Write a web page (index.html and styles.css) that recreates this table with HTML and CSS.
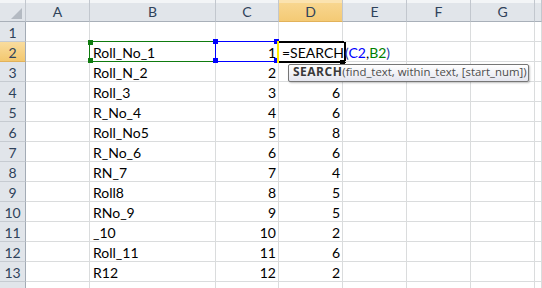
FILE: index.html
```html
<!DOCTYPE html>
<html lang="en">
<head>
    <meta charset="UTF-8">
    <meta name="viewport" content="width=device-width, initial-scale=1.0">
    <title>SEARCH formula</title>
    <link rel="stylesheet" href="styles.css">
</head>
<body>
    <div class="sheet">
        <div class="grid">
            <!-- cells are rendered by the script below -->
        </div>

        <!-- range finder boxes for the references in the formula -->
        <div class="range range-b"></div>
        <div class="knob knob-green" style="left: 88px; top: 40px;"></div>
        <div class="knob knob-green" style="left: 88px; top: 58px;"></div>
        <div class="range range-c"></div>
        <div class="knob knob-blue" style="left: 213px; top: 39px;"></div>
        <div class="knob knob-blue" style="left: 213px; top: 58px;"></div>
        <div class="knob knob-blue" style="left: 274px; top: 39px;"></div>
        <div class="knob knob-blue" style="left: 274px; top: 58px;"></div>

        <!-- cell being edited -->
        <div class="edit-box"></div>
        <div class="edit-mark"></div>
        <div class="fill-handle"></div>

        <div class="tip"><b>SEARCH</b>(find_text, within_text, [start_num])</div>
    </div>

    <script>
// Sheet data: column B text, column C number, column D result
// (D3 sits under the tooltip, so it is left blank)
const rows = [
    ['', '', ''],
    ['Roll_No_1', '1', 'formula'],
    ['Roll_N_2', '2', ''],
    ['Roll_3', '3', '6'],
    ['R_No_4', '4', '6'],
    ['Roll_No5', '5', '8'],
    ['R_No_6', '6', '6'],
    ['RN_7', '7', '4'],
    ['Roll8', '8', '5'],
    ['RNo_9', '9', '5'],
    ['_10', '10', '2'],
    ['Roll_11', '11', '6'],
    ['R12', '12', '2'],
    ['', '', '']
];

const columns = ['A', 'B', 'C', 'D', 'E', 'F', 'G', ''];
const activeCol = 'D';
const activeRow = 2;

// formula shown while typing in D2
const formulaHTML = '=SEARCH<span class="caret"></span><span class="paren">(</span>' +
    '<span class="ref-c">C2</span>,<span class="ref-b">B2</span><span class="paren">)</span>';

function renderSheet() {
    const grid = document.querySelector('.grid');
    let html = '<div class="cell head corner"></div>';

    columns.forEach(col => {
        const active = col === activeCol ? ' active' : '';
        html += `<div class="cell head${active}">${col}</div>`;
    });

    rows.forEach((row, i) => {
        const n = i + 1;
        const active = n === activeRow ? ' active' : '';
        // last row only peeks in at the bottom edge, its number is not visible
        const label = n < rows.length ? n : '';
        html += `<div class="cell rowhead${active}">${label}</div>`;
        html += '<div class="cell"></div>';
        html += `<div class="cell">${row[0]}</div>`;
        html += `<div class="cell num">${row[1]}</div>`;
        if (row[2] === 'formula') {
            html += `<div class="cell editing">${formulaHTML}</div>`;
        } else {
            html += `<div class="cell num">${row[2]}</div>`;
        }
        html += '<div class="cell"></div><div class="cell"></div><div class="cell"></div><div class="cell"></div>';
    });

    grid.innerHTML = html;
}

document.addEventListener('DOMContentLoaded', () => {
    renderSheet();
});
    </script>
</body>
</html>
```

FILE: styles.css
```css
* {
    margin: 0;
    padding: 0;
    box-sizing: border-box;
}

body {
    font-family: Lato, "Liberation Sans", sans-serif;
    font-size: 14px;
    background-color: #fff;
    overflow: hidden;
}

.sheet {
    position: relative;
    width: 542px;
    height: 288px;
    overflow: hidden;
}

.grid {
    display: grid;
    grid-template-columns: 26px 64px 126px 63px 64px 64px 64px 64px 1fr;
    grid-template-rows: 22px;
    grid-auto-rows: 20px;
}

.cell {
    border-right: 1px solid #dadcdd;
    border-bottom: 1px solid #dadcdd;
    line-height: 21px;
    padding: 0 3px;
    white-space: nowrap;
    color: #000;
}

.num {
    text-align: right;
    padding-right: 2px;
}

.head {
    background: linear-gradient(#f3f5f7 0, #f3f5f7 3px, #e1e5ea 3px);
    color: #2f425a;
    text-align: center;
    padding-top: 1px;
    border-right-color: #c2c7ce;
    border-bottom-color: #a9b0b9;
}

.rowhead {
    background-color: #e1e5ea;
    color: #2f425a;
    text-align: center;
    padding: 0;
    border-right-color: #a3abb5;
    border-bottom-color: #c6cbd1;
}

.head.active,
.rowhead.active {
    background: linear-gradient(#f9dc9e, #f3c86f);
    border-bottom-color: #e2b25a;
}

.head.active {
    background: linear-gradient(#fbe3b0 0, #fbe3b0 3px, #f8d68f 3px, #f4ca75);
}

.corner {
    position: relative;
}

.corner::after {
    content: '';
    position: absolute;
    right: 3px;
    bottom: 2px;
    border-style: solid;
    border-width: 0 0 11px 11px;
    border-color: transparent transparent #b4bac2 transparent;
}

.editing {
    border-right-color: transparent;
    overflow: visible;
}

.caret {
    display: inline-block;
    width: 2px;
    height: 21px;
    background-color: #000;
    vertical-align: -5px;
    margin: 0 -1px 0 0;
}

.ref-c {
    color: #0000ff;
}

.ref-b {
    color: #008000;
}

.paren {
    color: #1f3aa8;
}

/* overlays */
.range {
    position: absolute;
    top: 41px;
    height: 21px;
}

.range-b {
    left: 89px;
    width: 127px;
    border: 1px solid #0f7b0f;
}

.range-c {
    left: 215px;
    width: 64px;
    border: 1px solid #0000ff;
}

.knob {
    position: absolute;
    width: 5px;
    height: 5px;
}

.knob-green {
    background-color: #0f7b0f;
}

.knob-blue {
    background-color: #0000ff;
}

.edit-box {
    position: absolute;
    left: 279px;
    top: 41px;
    width: 65px;
    height: 22px;
    border-top: 2px solid #000;
    border-bottom: 2px solid #000;
}

.edit-mark {
    position: absolute;
    left: 277px;
    top: 41px;
    width: 2px;
    height: 22px;
    background-color: #ffee00;
}

.fill-handle {
    position: absolute;
    left: 340px;
    top: 60px;
    width: 5px;
    height: 4px;
    background-color: #000;
}

.tip {
    position: absolute;
    left: 288px;
    top: 64px;
    width: 241px;
    height: 18px;
    padding-left: 4px;
    border: 1px solid #767676;
    border-radius: 2px;
    background: linear-gradient(#ffffff, #e4e5ee);
    box-shadow: 1px 1px 2px rgba(0, 0, 0, 0.25);
    font-family: "Open Sans", "Noto Sans", sans-serif;
    font-size: 11.4px;
    line-height: 14px;
    color: #4c4c4c;
    white-space: nowrap;
}

.tip b {
    font-size: 12px;
    letter-spacing: 0.5px;
    color: #3a3a3a;
}
```
